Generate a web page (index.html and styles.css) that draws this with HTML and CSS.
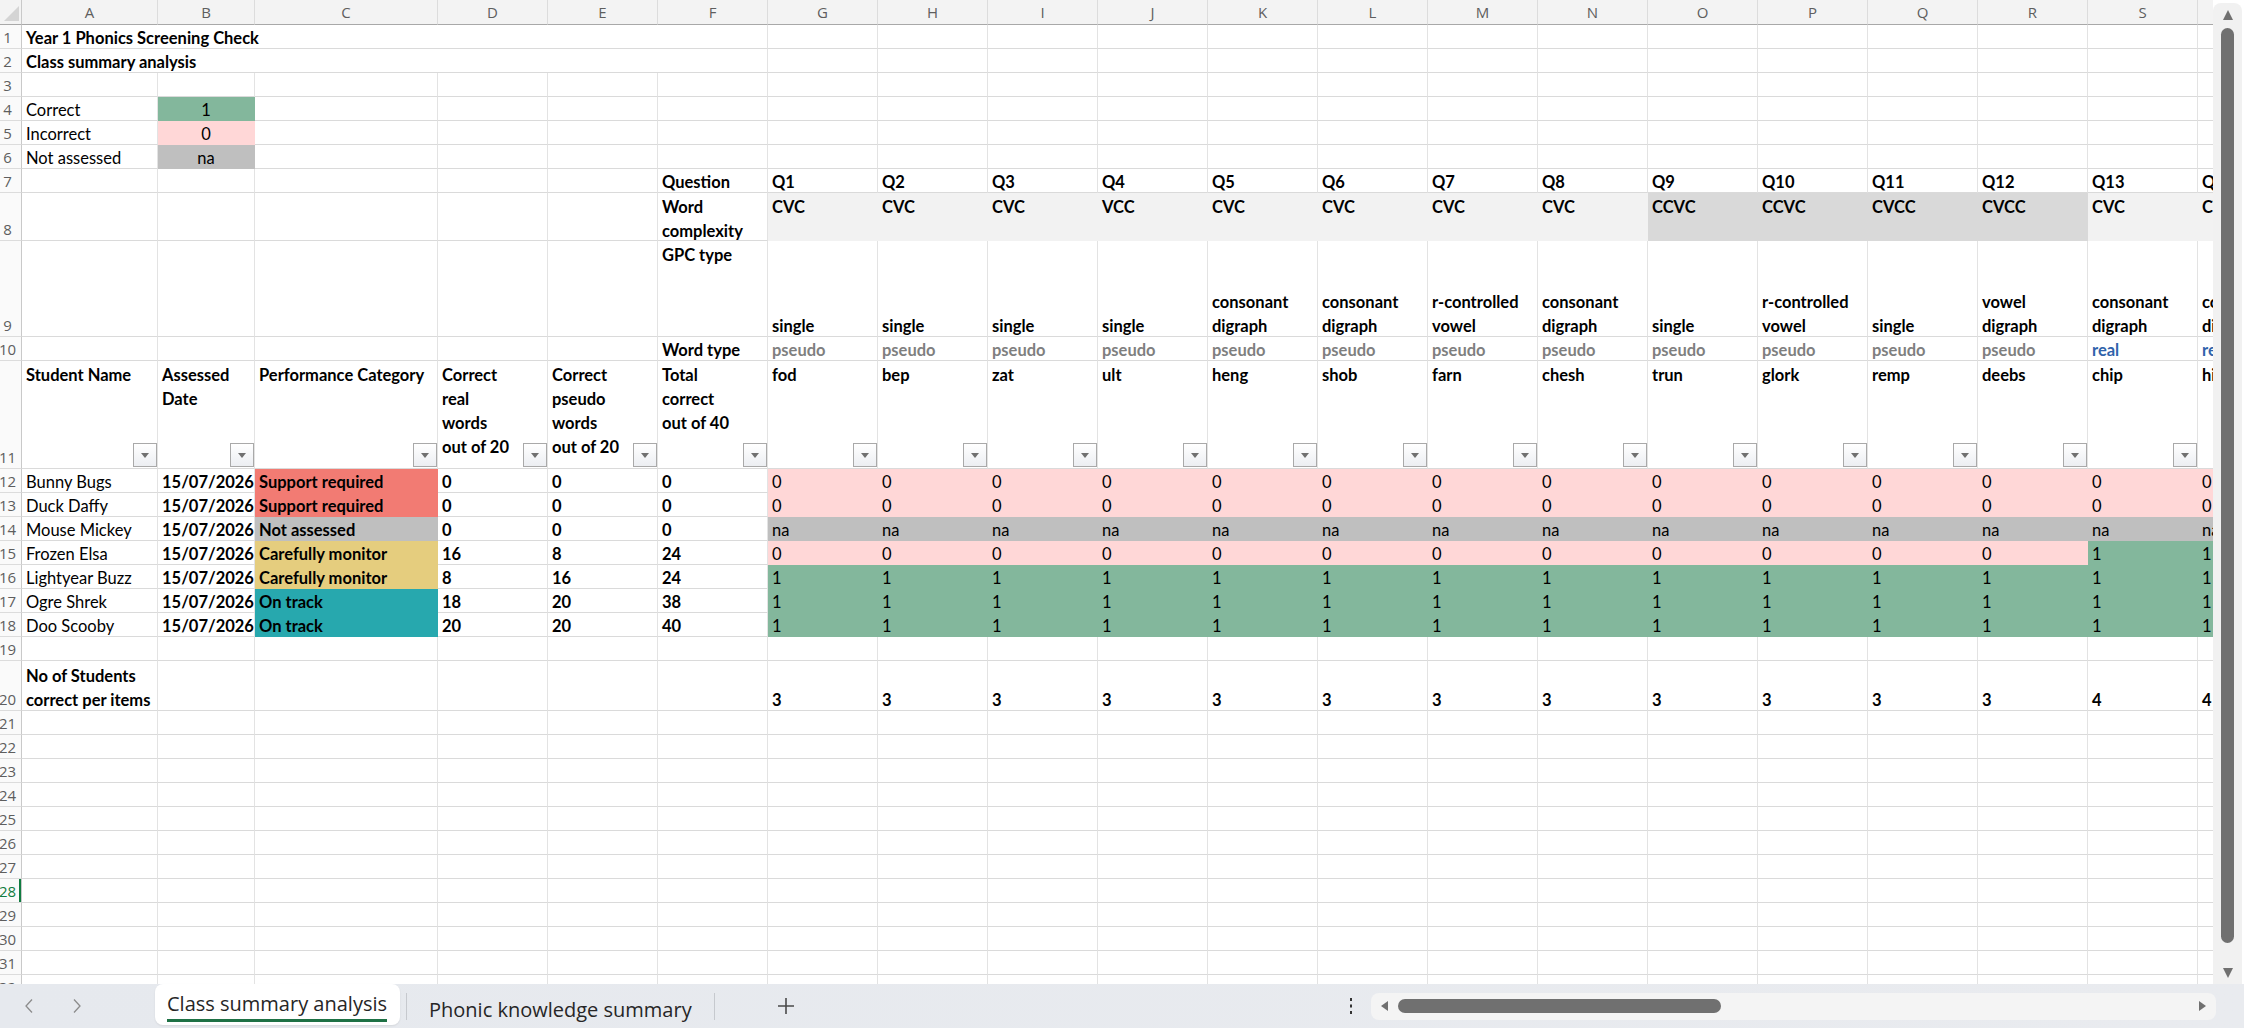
FILE: index.html
```html
<!DOCTYPE html>
<html lang="en">
<head>
    <meta charset="UTF-8">
    <meta name="viewport" content="width=device-width, initial-scale=1.0">
    <title>Year 1 Phonics Screening Check - Class summary analysis</title>
    <link rel="stylesheet" href="styles.css">
</head>
<body>
    <div class="sheet-area">
        <div class="sheet-viewport">
            <div id="sheet" class="sheet"></div>
        </div>
        <div class="vscroll">
            <span class="arrow-up"></span>
            <span class="vthumb"></span>
            <span class="arrow-down"></span>
        </div>
    </div>

    <footer class="tabbar">
        <button class="nav-btn">
            <svg class="chevron" viewBox="0 0 10 16"><path d="M8 1.5 2 8l6 6.5"></path></svg>
        </button>
        <button class="nav-btn">
            <svg class="chevron" viewBox="0 0 10 16"><path d="M2 1.5 8 8l-6 6.5"></path></svg>
        </button>
        <div class="tab tab-active"><span>Class summary analysis</span></div>
        <span class="tab-sep"></span>
        <div class="tab">Phonic knowledge summary</div>
        <span class="tab-sep"></span>
        <button class="add-sheet">
            <svg class="plus" viewBox="0 0 18 18"><path d="M9 1v16M1 9h16"></path></svg>
        </button>
        <span class="more">
            <svg viewBox="0 0 4 16"><rect x="1" y="0" width="2" height="3"></rect><rect x="1" y="6.5" width="2" height="3"></rect><rect x="1" y="13" width="2" height="3"></rect></svg>
        </span>
        <div class="hscroll">
            <span class="arrow-left"></span>
            <span class="hthumb"></span>
            <span class="arrow-right"></span>
        </div>
    </footer>

    <script>
        const COLS = 'ABCDEFGHIJKLMNOPQRST'.split('');
        const ROW_COUNT = 32;
        const ACTIVE_ROW = 28;

        const questions = [
            { q: 'Q1',  shape: 'CVC',  gpc: 'single',                type: 'pseudo', word: 'fod' },
            { q: 'Q2',  shape: 'CVC',  gpc: 'single',                type: 'pseudo', word: 'bep' },
            { q: 'Q3',  shape: 'CVC',  gpc: 'single',                type: 'pseudo', word: 'zat' },
            { q: 'Q4',  shape: 'VCC',  gpc: 'single',                type: 'pseudo', word: 'ult' },
            { q: 'Q5',  shape: 'CVC',  gpc: 'consonant<br>digraph',  type: 'pseudo', word: 'heng' },
            { q: 'Q6',  shape: 'CVC',  gpc: 'consonant<br>digraph',  type: 'pseudo', word: 'shob' },
            { q: 'Q7',  shape: 'CVC',  gpc: 'r-controlled<br>vowel', type: 'pseudo', word: 'farn' },
            { q: 'Q8',  shape: 'CVC',  gpc: 'consonant<br>digraph',  type: 'pseudo', word: 'chesh' },
            { q: 'Q9',  shape: 'CCVC', gpc: 'single',                type: 'pseudo', word: 'trun' },
            { q: 'Q10', shape: 'CCVC', gpc: 'r-controlled<br>vowel', type: 'pseudo', word: 'glork' },
            { q: 'Q11', shape: 'CVCC', gpc: 'single',                type: 'pseudo', word: 'remp' },
            { q: 'Q12', shape: 'CVCC', gpc: 'vowel<br>digraph',      type: 'pseudo', word: 'deebs' },
            { q: 'Q13', shape: 'CVC',  gpc: 'consonant<br>digraph',  type: 'real',   word: 'chip' },
            { q: 'Q14', shape: 'CVC',  gpc: 'consonant<br>digraph',  type: 'real',   word: 'hitch' }
        ];

        // marks: 1 = correct, 0 = incorrect, n = not assessed
        const students = [
            { name: 'Bunny Bugs',     status: 'support', real: 0,  pseudo: 0,  marks: '00000000000000' },
            { name: 'Duck Daffy',     status: 'support', real: 0,  pseudo: 0,  marks: '00000000000000' },
            { name: 'Mouse Mickey',   status: 'na',      real: 0,  pseudo: 0,  marks: 'nnnnnnnnnnnnnn' },
            { name: 'Frozen Elsa',    status: 'monitor', real: 16, pseudo: 8,  marks: '00000000000011' },
            { name: 'Lightyear Buzz', status: 'monitor', real: 8,  pseudo: 16, marks: '11111111111111' },
            { name: 'Ogre Shrek',     status: 'ontrack', real: 18, pseudo: 20, marks: '11111111111111' },
            { name: 'Doo Scooby',     status: 'ontrack', real: 20, pseudo: 20, marks: '11111111111111' }
        ];

        const categories = {
            support: ['Support required', 'cat-support'],
            monitor: ['Carefully monitor', 'cat-monitor'],
            ontrack: ['On track', 'cat-ontrack'],
            na: ['Not assessed', 'fill-na']
        };

        const marks = {
            '1': ['1', 'fill-correct'],
            '0': ['0', 'fill-wrong'],
            'n': ['na', 'fill-na']
        };

        const content = {};
        function set(row, col, html, cls) {
            content[row] = content[row] || {};
            content[row][col] = { html: String(html), cls: cls || '' };
        }

        set(1, 'A', 'Year 1 Phonics Screening Check', 'b wide');
        set(2, 'A', 'Class summary analysis', 'b wide');
        set(4, 'A', 'Correct');
        set(4, 'B', '1', 'center fill-correct');
        set(5, 'A', 'Incorrect');
        set(5, 'B', '0', 'center fill-wrong');
        set(6, 'A', 'Not assessed');
        set(6, 'B', 'na', 'center fill-na');

        set(7, 'F', 'Question', 'b');
        set(8, 'F', 'Word<br>complexity', 'b top');
        set(9, 'F', 'GPC type', 'b top');
        set(10, 'F', 'Word type', 'b');

        set(11, 'A', 'Student Name', 'b top');
        set(11, 'B', 'Assessed<br>Date', 'b top');
        set(11, 'C', 'Performance Category', 'b top');
        set(11, 'D', 'Correct<br>real<br>words<br>out of 20', 'b top');
        set(11, 'E', 'Correct<br>pseudo<br>words<br>out of 20', 'b top');
        set(11, 'F', 'Total<br>correct<br>out of 40', 'b top');

        questions.forEach((item, i) => {
            const col = COLS[6 + i];
            set(7, col, item.q, 'b');
            set(8, col, item.shape, 'b top ' + (item.shape.length > 3 ? 'shade-dark' : 'shade-light'));
            set(9, col, item.gpc, 'b');
            set(10, col, item.type, 'b type-' + item.type);
            set(11, col, item.word, 'b top');
        });

        students.forEach((s, i) => {
            const row = 12 + i;
            const cat = categories[s.status];
            set(row, 'A', s.name);
            set(row, 'B', '15/07/2026', 'b');
            set(row, 'C', cat[0], 'b ' + cat[1]);
            set(row, 'D', s.real, 'b');
            set(row, 'E', s.pseudo, 'b');
            set(row, 'F', s.real + s.pseudo, 'b');
            s.marks.split('').forEach((m, q) => {
                set(row, COLS[6 + q], marks[m][0], marks[m][1]);
            });
        });

        set(20, 'A', 'No of Students<br>correct per items', 'b');
        questions.forEach((item, q) => {
            const total = students.filter(s => s.marks[q] === '1').length;
            set(20, COLS[6 + q], total, 'b');
        });

        const sheet = document.getElementById('sheet');

        function add(cls, html) {
            const el = document.createElement('div');
            el.className = cls;
            if (html) el.innerHTML = html;
            sheet.appendChild(el);
            return el;
        }

        add('corner', '<span class="select-all"></span>');
        COLS.forEach(c => add('ch', c));

        for (let r = 1; r <= ROW_COUNT; r++) {
            add('rh' + (r === ACTIVE_ROW ? ' active' : ''), '<span>' + r + '</span>');
            for (let i = 0; i < COLS.length; i++) {
                const item = (content[r] || {})[COLS[i]];
                const cell = add('cell' + (item && item.cls ? ' ' + item.cls : ''),
                    item ? '<span>' + item.html + '</span>' : '');
                if (item && item.cls.includes('wide')) i += 5;
                if (r === 11) cell.insertAdjacentHTML('beforeend', '<i class="filter"></i>');
            }
        }
    </script>
</body>
</html>
```

FILE: styles.css
```css
* {
    margin: 0;
    padding: 0;
    box-sizing: border-box;
}

body {
    width: 2244px;
    height: 1028px;
    overflow: hidden;
    display: flex;
    flex-direction: column;
    background: #fff;
    color: #000;
    font-family: Lato, "Liberation Sans", sans-serif;
}

button {
    border: none;
    background: none;
    cursor: pointer;
}

/* Grid */
.sheet-area {
    height: 984px;
    display: flex;
}

.sheet-viewport {
    flex: 1;
    overflow: hidden;
}

.sheet {
    display: grid;
    width: max-content;
    grid-template-columns: 22px 136px 97px 183px repeat(17, 110px);
    grid-template-rows: 25px repeat(7, 24px) 48px 96px 24px 108px repeat(8, 24px) 50px repeat(12, 24px);
}

.corner {
    background: #f3f3f3;
    border-bottom: 1px solid #a8a8a8;
    border-right: 1px solid #c9c9c9;
    display: flex;
    align-items: flex-end;
    justify-content: flex-end;
    padding: 0 2px 3px 0;
}

.select-all {
    width: 0;
    height: 0;
    border-left: 15px solid transparent;
    border-bottom: 15px solid #d4d4d4;
}

.ch {
    background: #f3f3f3;
    border-right: 1px solid #dcdcdc;
    border-bottom: 1px solid #a8a8a8;
    display: flex;
    align-items: center;
    justify-content: center;
    font-family: "Open Sans", sans-serif;
    font-size: 15px;
    color: #5e5e5e;
}

.rh {
    background: #fafafa;
    border-right: 1px solid #c9c9c9;
    border-bottom: 1px solid #dcdcdc;
    display: flex;
    align-items: flex-end;
    justify-content: center;
    padding-right: 6px;
    font-family: "Open Sans", sans-serif;
    font-size: 15px;
    line-height: 22px;
    color: #5e5e5e;
    white-space: nowrap;
}

.rh.active {
    color: #107c41;
    box-shadow: inset -2px 0 #107c41;
}

.cell {
    position: relative;
    display: flex;
    align-items: flex-end;
    padding: 0 4px;
    border-right: 1px solid #e3e3e3;
    border-bottom: 1px solid #dadada;
    font-size: 16.5px;
    line-height: 24px;
    white-space: nowrap;
    overflow: hidden;
}

.cell > span {
    margin-bottom: -2px;
}

.cell.top {
    align-items: flex-start;
    padding-top: 2px;
}

.cell.top > span {
    margin-bottom: 0;
}

.cell.center {
    justify-content: center;
}

.cell.wide {
    grid-column: span 6;
}

.b {
    font-weight: 700;
}

.type-pseudo {
    color: #7f7f7f;
}

.type-real {
    color: #2f63ab;
}

/* Fills hide the gridlines underneath */
.fill-correct,
.fill-wrong,
.fill-na,
.cat-support,
.cat-monitor,
.cat-ontrack,
.shade-light,
.shade-dark {
    border-color: transparent;
}

.fill-correct { background: #83b79c; }
.fill-wrong { background: #ffd7d7; }
.fill-na { background: #bfbfbf; }
.cat-support { background: #f27b73; }
.cat-monitor { background: #e5cd7e; }
.cat-ontrack { background: #27a8ae; }
.shade-light { background: #f2f2f2; }
.shade-dark { background: #d9d9d9; }

.filter {
    position: absolute;
    right: 0;
    bottom: 1px;
    width: 24px;
    height: 24px;
    border: 1px solid #a9a9a9;
    background: linear-gradient(#ffffff, #eceef2);
    display: flex;
    align-items: center;
    justify-content: center;
}

.filter::after {
    content: "";
    border-left: 4px solid transparent;
    border-right: 4px solid transparent;
    border-top: 5px solid #707070;
}

/* Vertical scrollbar */
.vscroll {
    width: 29px;
    margin: 3px 2px 0 0;
    background: #f1f1f1;
    border-radius: 8px 8px 0 0;
    display: flex;
    flex-direction: column;
    align-items: center;
    padding-top: 7px;
}

.arrow-up {
    border-left: 5px solid transparent;
    border-right: 5px solid transparent;
    border-bottom: 10px solid #707070;
}

.vthumb {
    width: 13px;
    height: 915px;
    margin-top: 8px;
    background: #707070;
    border-radius: 7px;
}

.arrow-down {
    margin-top: 25px;
    border-left: 5px solid transparent;
    border-right: 5px solid transparent;
    border-top: 10px solid #707070;
}

/* Sheet tabs */
.tabbar {
    flex: 1;
    display: flex;
    align-items: center;
    padding-left: 5px;
    padding-right: 28px;
    background: linear-gradient(to right, #e6e9ee, #e9ebef);
    font-family: "Open Sans", sans-serif;
    font-size: 20px;
    color: #262626;
}

.nav-btn {
    width: 48px;
    height: 44px;
    display: flex;
    align-items: center;
    justify-content: center;
}

.chevron {
    width: 10px;
    height: 16px;
    fill: none;
    stroke: #8c8c8c;
    stroke-width: 1.3;
}

.tab {
    align-self: stretch;
    padding: 14px 22px 0;
    line-height: 24px;
    white-space: nowrap;
}

.tab-active {
    margin-left: 54px;
    width: 245px;
    height: 41px;
    padding: 8px 12px 0;
    background: #fff;
    border-radius: 8px;
    box-shadow: 0 1px 2px rgba(0, 0, 0, 0.08);
}

.tab-active span {
    display: inline-block;
    padding-bottom: 3px;
    border-bottom: 3px solid #1e7145;
}

.tab-sep {
    width: 1px;
    height: 27px;
    background: #c6c9ce;
}

.tab-active + .tab-sep {
    margin-left: 6px;
}

.add-sheet {
    margin-left: 59px;
    width: 24px;
    height: 24px;
    display: flex;
    align-items: center;
    justify-content: center;
}

.plus {
    width: 18px;
    height: 18px;
    fill: none;
    stroke: #4a4a4a;
    stroke-width: 1.6;
}

.more {
    margin-left: auto;
    width: 10px;
    display: flex;
    justify-content: center;
    margin-right: 15px;
}

.more svg {
    width: 4px;
    height: 16px;
    fill: #333;
}

.hscroll {
    width: 845px;
    height: 27px;
    background: #f4f4f4;
    border-radius: 8px;
    display: flex;
    align-items: center;
    padding-left: 10px;
}

.arrow-left {
    border-top: 5px solid transparent;
    border-bottom: 5px solid transparent;
    border-right: 7px solid #707070;
}

.hthumb {
    width: 323px;
    height: 14px;
    margin-left: 10px;
    background: #707070;
    border-radius: 7px;
}

.arrow-right {
    margin-left: auto;
    margin-right: 10px;
    border-top: 5px solid transparent;
    border-bottom: 5px solid transparent;
    border-left: 7px solid #707070;
}
```
